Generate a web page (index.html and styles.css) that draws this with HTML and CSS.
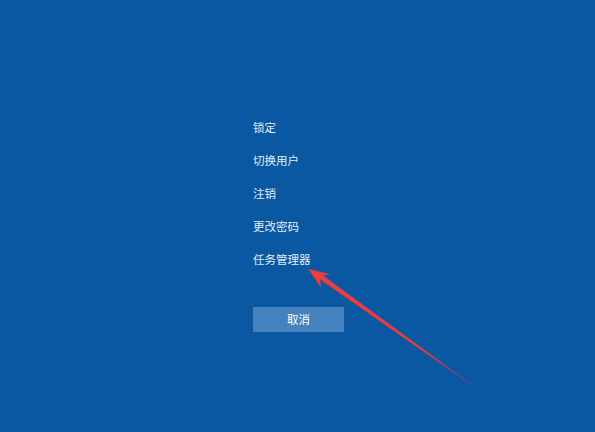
FILE: index.html
```html
<!DOCTYPE html>
<html lang="zh-CN">
<head>
<meta charset="utf-8">
<title>安全选项</title>
<link rel="stylesheet" href="styles.css">
</head>
<body>
<div class="screen">
  <nav class="menu">
    <div class="item">锁定</div>
    <div class="item">切换用户</div>
    <div class="item">注销</div>
    <div class="item">更改密码</div>
    <div class="item">任务管理器</div>
    <div class="cancel">取消</div>
  </nav>
  <svg class="arrow" viewBox="0 0 595 432" width="595" height="432" aria-hidden="true">
    <defs>
      <linearGradient id="fade" gradientUnits="userSpaceOnUse" x1="309" y1="269" x2="472" y2="385">
        <stop offset="0" stop-color="#ef3d3d"/>
        <stop offset="0.7" stop-color="#e83b3e"/>
        <stop offset="1" stop-color="#b0406a" stop-opacity="0.5"/>
      </linearGradient>
    </defs>
    <polygon fill="url(#fade)" points="308.5,269 330.9,274.2 323,275.6 472.3,384.8 471.7,385.2 320.2,279.6 320.9,287.6"/>
  </svg>
</div>
</body>
</html>
```
FILE: styles.css
```css
html, body {
  margin: 0;
  padding: 0;
  width: 595px;
  height: 432px;
  overflow: hidden;
}
.screen {
  position: relative;
  width: 595px;
  height: 432px;
  background: #0a58a2;
  font-family: "Microsoft YaHei", "Noto Sans CJK SC", sans-serif;
}
.menu {
  display: flex;
  flex-direction: column;
  align-items: flex-start;
  padding: 111px 0 0 253px;
}
.item {
  height: 33px;
  line-height: 33px;
  font-size: 11.5px;
  color: #e2ecf6;
}
.cancel {
  margin-top: 31px;
  width: 91px;
  height: 25px;
  line-height: 25px;
  text-align: center;
  font-size: 11.5px;
  color: #ffffff;
  background: #4682bd;
}
.arrow {
  position: absolute;
  left: 0;
  top: 0;
}
```
